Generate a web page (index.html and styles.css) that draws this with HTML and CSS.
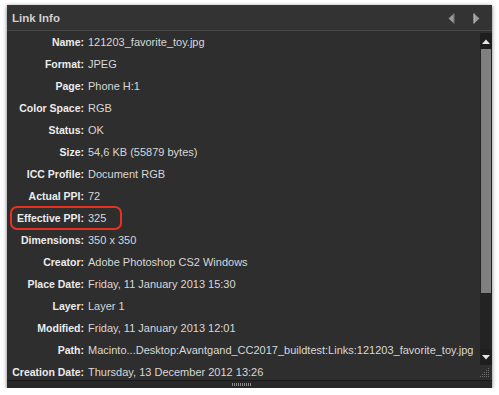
FILE: index.html
```html
<!DOCTYPE html>
<html lang="en">
<head>
    <meta charset="UTF-8">
    <title>Link Info</title>
    <link rel="stylesheet" href="styles.css">
</head>
<body>
    <div class="panel">
        <header class="panel-head">
            <span class="panel-title">Link Info</span>
            <div class="nav">
                <svg width="7" height="11" viewBox="0 0 7 11"><path d="M6 0.5 L0.5 5.5 L6 10.5 Z" fill="#9a9a9a"/><path d="M6 0.5 L6 10.5" stroke="#6e6e6e" stroke-width="1.2"/></svg>
                <svg width="7" height="11" viewBox="0 0 7 11"><path d="M1 0.5 L6.5 5.5 L1 10.5 Z" fill="#9a9a9a"/><path d="M1 0.5 L1 10.5" stroke="#bdbdbd" stroke-width="1.2"/></svg>
            </div>
        </header>
        <div class="panel-body">
            <div class="info-list">
                <div class="row"><span class="label">Name:</span><span class="value">121203_favorite_toy.jpg</span></div>
                <div class="row"><span class="label">Format:</span><span class="value">JPEG</span></div>
                <div class="row"><span class="label">Page:</span><span class="value">Phone H:1</span></div>
                <div class="row"><span class="label">Color Space:</span><span class="value">RGB</span></div>
                <div class="row"><span class="label">Status:</span><span class="value">OK</span></div>
                <div class="row"><span class="label">Size:</span><span class="value">54,6 KB (55879 bytes)</span></div>
                <div class="row"><span class="label">ICC Profile:</span><span class="value">Document RGB</span></div>
                <div class="row"><span class="label">Actual PPI:</span><span class="value">72</span></div>
                <div class="row"><span class="label">Effective PPI:</span><span class="value">325</span><span class="highlight"></span></div>
                <div class="row"><span class="label">Dimensions:</span><span class="value">350 x 350</span></div>
                <div class="row"><span class="label">Creator:</span><span class="value">Adobe Photoshop CS2 Windows</span></div>
                <div class="row"><span class="label">Place Date:</span><span class="value">Friday, 11 January 2013 15:30</span></div>
                <div class="row"><span class="label">Layer:</span><span class="value">Layer 1</span></div>
                <div class="row"><span class="label">Modified:</span><span class="value">Friday, 11 January 2013 12:01</span></div>
                <div class="row"><span class="label">Path:</span><span class="value">Macinto...Desktop:Avantgand_CC2017_buildtest:Links:121203_favorite_toy.jpg</span></div>
                <div class="row"><span class="label">Creation Date:</span><span class="value">Thursday, 13 December 2012 13:26</span></div>
            </div>
            <div class="vscroll">
                <div class="vbtn"><svg width="8" height="5" viewBox="0 0 8 5"><path d="M0 5 L4 0.5 L8 5 Z" fill="#e6e6e6"/></svg></div>
                <div class="vthumb"></div>
                <div class="vtrack"></div>
                <div class="vbtn down"><svg width="8" height="5" viewBox="0 0 8 5"><path d="M0 0 L4 4.5 L8 0 Z" fill="#e6e6e6"/></svg></div>
            </div>
            <svg class="grip" width="10" height="10" viewBox="0 0 10 10">
                <g fill="#6a6a6a">
                    <rect x="8" y="0" width="1" height="1"/>
                    <rect x="6" y="2" width="1" height="1"/><rect x="8" y="2" width="1" height="1"/>
                    <rect x="4" y="4" width="1" height="1"/><rect x="6" y="4" width="1" height="1"/><rect x="8" y="4" width="1" height="1"/>
                    <rect x="2" y="6" width="1" height="1"/><rect x="4" y="6" width="1" height="1"/><rect x="6" y="6" width="1" height="1"/><rect x="8" y="6" width="1" height="1"/>
                    <rect x="0" y="8" width="1" height="1"/><rect x="2" y="8" width="1" height="1"/><rect x="4" y="8" width="1" height="1"/><rect x="6" y="8" width="1" height="1"/><rect x="8" y="8" width="1" height="1"/>
                </g>
            </svg>
        </div>
        <div class="panel-foot"><span class="foot-grip"></span></div>
    </div>
</body>
</html>
```

FILE: styles.css
```css
body{
    margin: 0;
    background-color: #fff;
    font-family: "Liberation Sans", Arial, sans-serif;
    font-size: 10.5px;
}
.panel{
    margin: 5px 0 0 7px;
    width: 485px;
    height: 383px;
    background-color: #2e2e2e;
    box-shadow: 0 1px 4px rgba(0,0,0,0.55);
    display: flex;
    flex-direction: column;
    overflow: hidden;
}
.panel-head{
    height: 25px;
    flex-shrink: 0;
    background-color: #333;
    border-bottom: 1px solid #464646;
    display: flex;
    align-items: center;
    justify-content: space-between;
    padding: 0 12px 0 5px;
}
.panel-title{
    color: #cfcfcf;
    font-weight: bold;
    font-size: 11.5px;
}
.nav{
    display: flex;
    gap: 18px;
    padding-top: 1px;
}
.panel-body{
    position: relative;
    flex: 1;
    display: flex;
    overflow: hidden;
}
.info-list{
    flex: 1;
    overflow: hidden;
}
.row{
    position: relative;
    display: flex;
    align-items: center;
    height: 22px;
    white-space: nowrap;
}
.label{
    width: 77px;
    flex-shrink: 0;
    display: flex;
    justify-content: flex-end;
    color: #ececec;
    font-weight: bold;
}
.value{
    margin-left: 4px;
    color: #d8d8d8;
    font-size: 11px;
}
.highlight{
    position: absolute;
    left: 3px;
    top: -1px;
    width: 108px;
    height: 20px;
    border: 2.5px solid #e8321f;
    border-radius: 7px;
}
.vscroll{
    width: 12px;
    flex-shrink: 0;
    margin-top: 2px;
    height: 332px;
    display: flex;
    flex-direction: column;
    background-color: #232323;
}
.vbtn{
    height: 16px;
    flex-shrink: 0;
    background-color: #1e1e1e;
    display: flex;
    align-items: center;
    justify-content: center;
}
.vthumb{
    height: 244px;
    margin: 0 1px;
    background-color: #808080;
}
.vtrack{
    flex: 1;
}
.grip{
    position: absolute;
    right: 2px;
    bottom: 2px;
}
.panel-foot{
    height: 7px;
    flex-shrink: 0;
    background-color: #282828;
    border-top: 1px solid #1a1a1a;
    display: flex;
    justify-content: center;
    align-items: center;
}
.foot-grip{
    width: 20px;
    height: 3px;
    margin-left: -16px;
    background: repeating-linear-gradient(90deg, #8a8a8a 0 1px, transparent 1px 2px);
}
```
